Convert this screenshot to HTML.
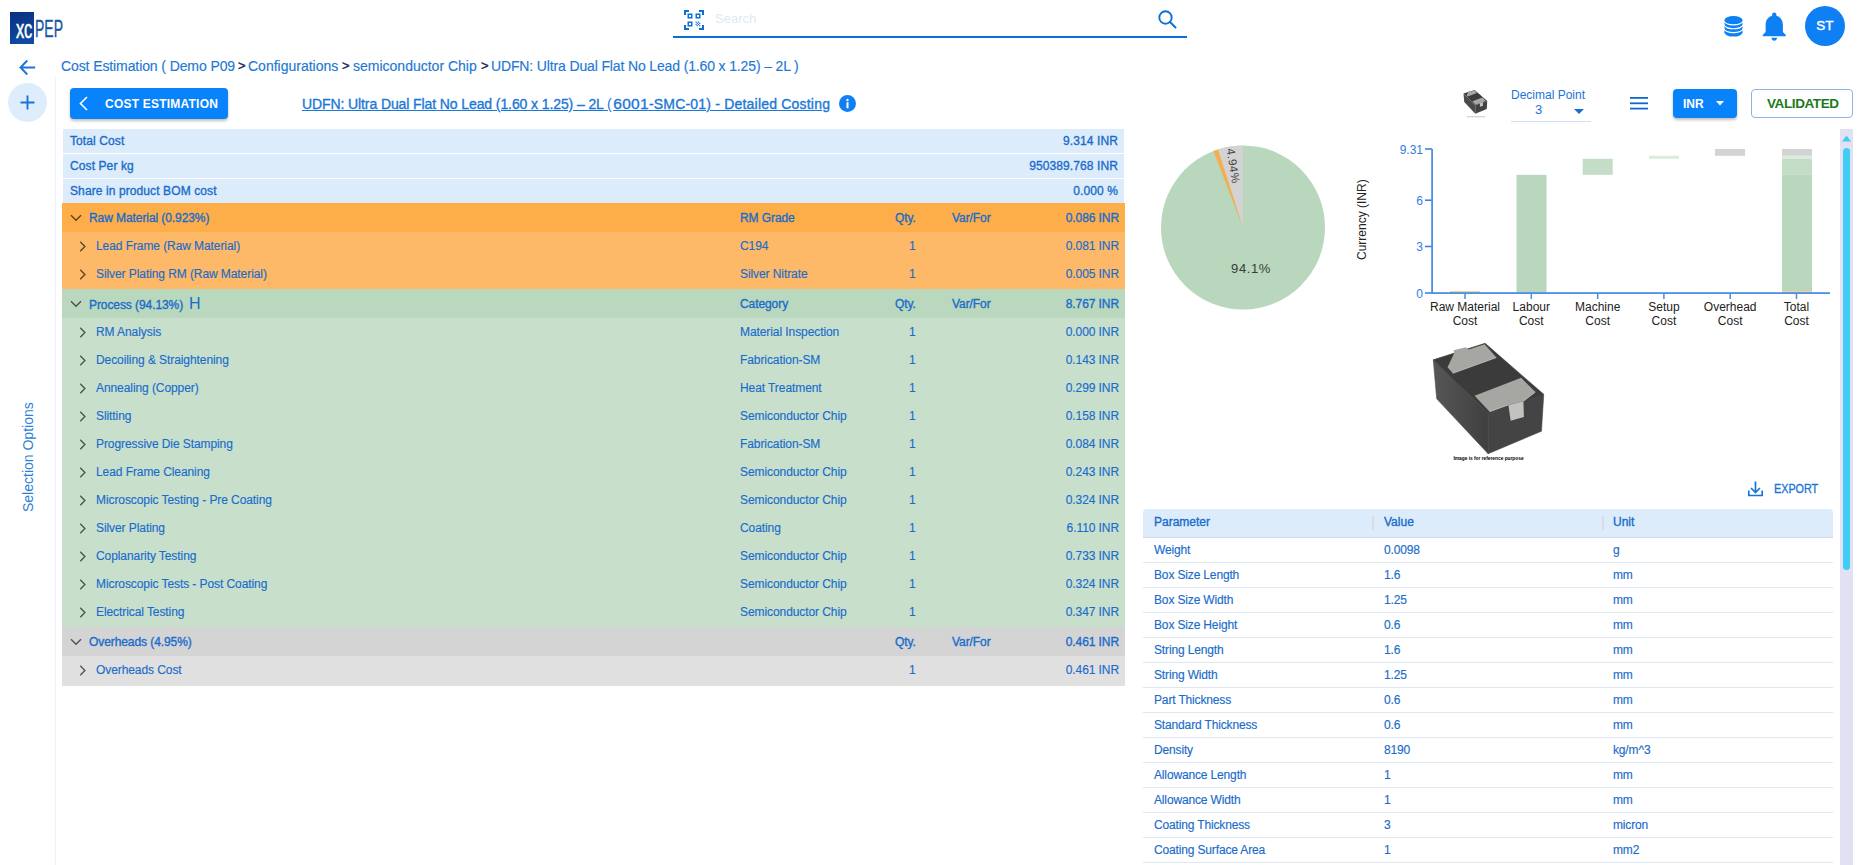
<!DOCTYPE html>
<html><head><meta charset="utf-8">
<style>
*{box-sizing:border-box;margin:0;padding:0}
html,body{width:1858px;height:865px;overflow:hidden;background:#fff;font-family:"Liberation Sans",sans-serif;color:#1a6ccb}
.r,.pr,.bc{-webkit-text-stroke:0.15px currentColor}
.a{position:absolute}
svg{display:block}
/* header */
#logo{left:10px;top:12px;width:24px;height:32px;background:linear-gradient(160deg,#0a2f80,#0f4fa6)}
#logo span{position:absolute;white-space:nowrap;font-weight:400;transform-origin:0 0}
#srchline{left:673px;top:36px;width:514px;height:2px;background:#0b6fd8}
#srchph{left:715px;top:11px;font-size:13px;color:#dfe8f6}
#avatar{left:1805px;top:6px;width:40px;height:40px;border-radius:50%;background:#0f80f4;color:#fff;font-size:13.5px;font-weight:400;-webkit-text-stroke:0.45px #fff;text-align:center;line-height:40px}
/* sidebar */
#sideline{left:55px;top:77px;width:1px;height:788px;background:#eef1f6}
#plus{left:8px;top:83px;width:39px;height:39px;border-radius:50%;background:#ddedfc}
#selopt{left:20px;top:512px;font-size:14px;color:#2b7fd8;transform:rotate(-90deg);transform-origin:0 0;white-space:nowrap}
/* breadcrumb */
.bc{top:58px;font-size:14px;white-space:nowrap;color:#1e78d4}
.bg{top:58px;font-size:13px;color:#1a1f5a;-webkit-text-stroke:0.4px #1a1f5a}
.md{font-weight:400!important;-webkit-text-stroke:0.35px currentColor}
/* toolbar */
#btnce{left:70px;top:88px;width:158px;height:31px;border-radius:4px;background:#0883fc;box-shadow:0 2px 3px rgba(0,0,0,.25);color:#fff;font-size:12px;font-weight:700}
#title{left:302px;top:95px;font-size:14px;font-weight:400;-webkit-text-stroke:0.35px currentColor;white-space:nowrap;text-decoration:underline;color:#1a78d8}
#info{left:839px;top:95px;width:17px;height:17px;border-radius:50%;background:#0f80f4}

/* table */
.r{position:absolute;left:62px;width:1063px;font-size:12px;white-space:nowrap;letter-spacing:-0.08px}
.r span{position:absolute}
.sm{left:63px;width:1061px;height:24px;line-height:24px;background:#ddecfb;font-weight:400;letter-spacing:0.1px;-webkit-text-stroke:0.35px currentColor;color:#1a6ccb}
.sl{left:7px}
.am{right:7px}
.rmh{background:#fdae48}.rmc{background:#fdb967}
.prh{background:#b9d8bd}.prc{background:#c8e0cb}
.ovh{background:#d4d4d4}.ovc{background:#e0e0e0}
.cv{position:absolute;left:8px;top:11px}
.cr{position:absolute;left:17px;top:9px}
.hl{left:27px;-webkit-text-stroke:0.35px currentColor}
.cl{left:34px}
.c2{left:678px}
.hb{-webkit-text-stroke:0.35px currentColor}
.qh{left:833px;-webkit-text-stroke:0.35px currentColor}
.qv{left:847px}
.vf{left:890px;-webkit-text-stroke:0.35px currentColor}
.r .am{right:6px}
.H{position:static!important;font-size:16px;font-weight:400;margin-left:6px;-webkit-text-stroke:0}

.ph{font-size:12px;-webkit-text-stroke:0.35px currentColor;color:#1a6ccb;white-space:nowrap}
.pr{left:1143px;width:690px;height:25px;border-bottom:1px solid #dfe8f2;font-size:12px;color:#1a6ccb;white-space:nowrap;letter-spacing:-0.15px}
.pr span{position:absolute;top:4.5px}
</style></head>
<body>
<!-- HEADER -->
<div id="logo" class="a"></div>
<div class="a" style="left:16px;top:14.9px;font-size:25px;line-height:normal;color:#fff;transform:scaleX(.66);transform-origin:0 0;letter-spacing:-0.5px;-webkit-text-stroke:0.5px #fff">xc</div>
<div class="a" style="left:34.5px;top:15.7px;font-size:23.3px;line-height:normal;color:#1a56a6;transform:scaleX(.6);transform-origin:0 0;-webkit-text-stroke:0.4px #1a56a6">PEP</div>

<svg class="a" style="left:684px;top:10px" width="20" height="20" viewBox="0 0 20 20" fill="#0e6fd6">
<path d="M0 0h5v2H2v3H0zM15 0h5v5h-2V2h-3zM0 15h2v3h3v2H0zM18 15h2v5h-5v-2h3z"/>
<path d="M3.5 3.5h5v5h-5zM5 5v2h2V5zM11.5 3.5h5v5h-5zM13 5v2h2V5zM3.5 11.5h5v5h-5zM5 13v2h2v-2z" fill-rule="evenodd"/>
<path d="M11.5 11.5h1.2v1.2h-1.2zM13.9 11.5h1.2v1.2h-1.2zM12.7 12.7h1.2v1.2h-1.2zM15.1 12.7h1.2v1.2h-1.2zM11.5 13.9h1.2v1.2h-1.2zM13.9 13.9h1.2v1.2h-1.2zM12.7 15.1h1.2v1.2h-1.2zM15.1 15.1h1.2v1.2h-1.2z"/>
</svg>
<div id="srchph" class="a">Search</div>
<svg class="a" style="left:1157px;top:9px" width="22" height="22" viewBox="0 0 22 22"><circle cx="8.5" cy="8.5" r="6.2" fill="none" stroke="#0e6fd6" stroke-width="1.9"/><path d="M13 13l5.5 5.5" stroke="#0e6fd6" stroke-width="2" stroke-linecap="round"/></svg>
<div id="srchline" class="a"></div>

<svg class="a" style="left:1720px;top:12px" width="28" height="28" viewBox="0 0 28 28"><g fill="#0f80f4"><rect x="4.5" y="8" width="18" height="12.6"/><ellipse cx="13.5" cy="20.6" rx="9" ry="4"/><ellipse cx="13.5" cy="8" rx="9" ry="4"/></g><g fill="none" stroke="#fff" stroke-width="1.15"><path d="M4.2 8.9A9.3 4 0 0 0 22.8 8.9"/><path d="M4.2 12.8A9.3 4 0 0 0 22.8 12.8"/><path d="M4.2 16.7A9.3 4 0 0 0 22.8 16.7"/></g></svg>
<svg class="a" style="left:1757.2px;top:9.1px" width="34.56" height="34.56" viewBox="0 0 24 24" fill="#0f80f4"><path d="M12 22c1.1 0 2-.9 2-2h-4c0 1.1.89 2 2 2zm6-6v-5c0-3.07-1.64-5.640-4.5-6.32V4c0-.83-.67-1.5-1.5-1.5s-1.5.67-1.5 1.5v.68C7.630 5.36 6 7.92 6 11v5l-2 2v1h16v-1l-2-2z"/></svg>
<div id="avatar" class="a">ST</div>

<!-- SIDEBAR -->
<svg class="a" style="left:19px;top:59px" width="17" height="17" viewBox="0 0 17 17"><path d="M16.2 8.5H1.8M8.3 1.5L1.5 8.5l6.8 7" fill="none" stroke="#1a73d8" stroke-width="1.9"/></svg>
<div id="plus" class="a"></div>
<svg class="a" style="left:20px;top:95px" width="15" height="15" viewBox="0 0 15 15"><path d="M7.5 0.5v14M0.5 7.5h14" stroke="#1a73d8" stroke-width="1.9"/></svg>
<div id="sideline" class="a"></div>
<div id="selopt" class="a">Selection Options</div>

<!-- BREADCRUMB -->
<div class="a bc" style="left:61px;letter-spacing:-0.1px">Cost Estimation ( Demo P09</div><div class="a bg" style="left:238px">&gt;</div><div class="a bc" style="left:248px">Configurations</div><div class="a bg" style="left:342px">&gt;</div><div class="a bc" style="left:353px">semiconductor Chip</div><div class="a bg" style="left:481px">&gt;</div><div class="a bc" style="left:491px;letter-spacing:-0.14px">UDFN: Ultra Dual Flat No Lead (1.60 x 1.25) – 2L )</div>

<!-- TOOLBAR -->
<div id="btnce" class="a">
<svg class="a" style="left:8px;top:8px" width="11" height="15" viewBox="0 0 11 15"><path d="M9 1L2.5 7.5 9 14" fill="none" stroke="#fff" stroke-width="1.6"/></svg>
<span class="a" style="left:35px;top:8.5px;white-space:nowrap;letter-spacing:0.22px">COST ESTIMATION</span>
</div>
<div id="title" class="a"><span style="letter-spacing:-0.1px">UDFN: Ultra Dual Flat No Lead (1.60 x 1.25) – 2L </span><span style="-webkit-text-stroke:0">(</span><span style="font-size:15.5px;letter-spacing:0.3px;margin-left:1.5px">6001</span><span style="letter-spacing:0.2px">-SMC-01) - Detailed Costing</span></div>
<div id="info" class="a"><svg width="17" height="17" viewBox="0 0 17 17"><circle cx="8.5" cy="5" r="1.2" fill="#fff"/><rect x="7.5" y="7.2" width="2" height="6" fill="#fff"/></svg></div>

<!-- TABLE -->
<div class="r sm" style="top:129px"><span class="sl">Total Cost</span><span class="am">9.314 INR</span></div>
<div class="r sm" style="top:154px"><span class="sl">Cost Per kg</span><span class="am">950389.768 INR</span></div>
<div class="r sm" style="top:179px"><span class="sl">Share in product BOM cost</span><span class="am">0.000 %</span></div>
<div class="r rmh" style="top:203px;height:29px;line-height:30.5px"><svg class="cv" width="12" height="8" viewBox="0 0 12 8"><path d="M1 1.2l5 5 5-5" fill="none" stroke="rgba(0,0,0,.62)" stroke-width="1.4"/></svg><span class="hl">Raw Material (0.923%)</span><span class="c2 hb">RM Grade</span><span class="qh">Qty.</span><span class="vf">Var/For</span><span class="am hb">0.086 INR</span></div>
<div class="r rmc" style="top:232px;height:28px;line-height:28px"><svg class="cr" width="8" height="11" viewBox="0 0 8 11"><path d="M1.2 0.8l4.7 4.7-4.7 4.7" fill="none" stroke="rgba(0,0,0,.62)" stroke-width="1.4"/></svg><span class="cl">Lead Frame (Raw Material)</span><span class="c2">C194</span><span class="qv">1</span><span class="am">0.081 INR</span></div>
<div class="r rmc" style="top:260px;height:29px;line-height:29px"><svg class="cr" width="8" height="11" viewBox="0 0 8 11"><path d="M1.2 0.8l4.7 4.7-4.7 4.7" fill="none" stroke="rgba(0,0,0,.62)" stroke-width="1.4"/></svg><span class="cl">Silver Plating RM (Raw Material)</span><span class="c2">Silver Nitrate</span><span class="qv">1</span><span class="am">0.005 INR</span></div>
<div class="r prh" style="top:289px;height:29px;line-height:30.5px"><svg class="cv" width="12" height="8" viewBox="0 0 12 8"><path d="M1 1.2l5 5 5-5" fill="none" stroke="rgba(0,0,0,.62)" stroke-width="1.4"/></svg><span class="hl">Process (94.13%)<span class="H">H</span></span><span class="c2 hb">Category</span><span class="qh">Qty.</span><span class="vf">Var/For</span><span class="am hb">8.767 INR</span></div>
<div class="r prc" style="top:318px;height:28px;line-height:28px"><svg class="cr" width="8" height="11" viewBox="0 0 8 11"><path d="M1.2 0.8l4.7 4.7-4.7 4.7" fill="none" stroke="rgba(0,0,0,.62)" stroke-width="1.4"/></svg><span class="cl">RM Analysis</span><span class="c2">Material Inspection</span><span class="qv">1</span><span class="am">0.000 INR</span></div>
<div class="r prc" style="top:346px;height:28px;line-height:28px"><svg class="cr" width="8" height="11" viewBox="0 0 8 11"><path d="M1.2 0.8l4.7 4.7-4.7 4.7" fill="none" stroke="rgba(0,0,0,.62)" stroke-width="1.4"/></svg><span class="cl">Decoiling &amp; Straightening</span><span class="c2">Fabrication-SM</span><span class="qv">1</span><span class="am">0.143 INR</span></div>
<div class="r prc" style="top:374px;height:28px;line-height:28px"><svg class="cr" width="8" height="11" viewBox="0 0 8 11"><path d="M1.2 0.8l4.7 4.7-4.7 4.7" fill="none" stroke="rgba(0,0,0,.62)" stroke-width="1.4"/></svg><span class="cl">Annealing (Copper)</span><span class="c2">Heat Treatment</span><span class="qv">1</span><span class="am">0.299 INR</span></div>
<div class="r prc" style="top:402px;height:28px;line-height:28px"><svg class="cr" width="8" height="11" viewBox="0 0 8 11"><path d="M1.2 0.8l4.7 4.7-4.7 4.7" fill="none" stroke="rgba(0,0,0,.62)" stroke-width="1.4"/></svg><span class="cl">Slitting</span><span class="c2">Semiconductor Chip</span><span class="qv">1</span><span class="am">0.158 INR</span></div>
<div class="r prc" style="top:430px;height:28px;line-height:28px"><svg class="cr" width="8" height="11" viewBox="0 0 8 11"><path d="M1.2 0.8l4.7 4.7-4.7 4.7" fill="none" stroke="rgba(0,0,0,.62)" stroke-width="1.4"/></svg><span class="cl">Progressive Die Stamping</span><span class="c2">Fabrication-SM</span><span class="qv">1</span><span class="am">0.084 INR</span></div>
<div class="r prc" style="top:458px;height:28px;line-height:28px"><svg class="cr" width="8" height="11" viewBox="0 0 8 11"><path d="M1.2 0.8l4.7 4.7-4.7 4.7" fill="none" stroke="rgba(0,0,0,.62)" stroke-width="1.4"/></svg><span class="cl">Lead Frame Cleaning</span><span class="c2">Semiconductor Chip</span><span class="qv">1</span><span class="am">0.243 INR</span></div>
<div class="r prc" style="top:486px;height:28px;line-height:28px"><svg class="cr" width="8" height="11" viewBox="0 0 8 11"><path d="M1.2 0.8l4.7 4.7-4.7 4.7" fill="none" stroke="rgba(0,0,0,.62)" stroke-width="1.4"/></svg><span class="cl">Microscopic Testing - Pre Coating</span><span class="c2">Semiconductor Chip</span><span class="qv">1</span><span class="am">0.324 INR</span></div>
<div class="r prc" style="top:514px;height:28px;line-height:28px"><svg class="cr" width="8" height="11" viewBox="0 0 8 11"><path d="M1.2 0.8l4.7 4.7-4.7 4.7" fill="none" stroke="rgba(0,0,0,.62)" stroke-width="1.4"/></svg><span class="cl">Silver Plating</span><span class="c2">Coating</span><span class="qv">1</span><span class="am">6.110 INR</span></div>
<div class="r prc" style="top:542px;height:28px;line-height:28px"><svg class="cr" width="8" height="11" viewBox="0 0 8 11"><path d="M1.2 0.8l4.7 4.7-4.7 4.7" fill="none" stroke="rgba(0,0,0,.62)" stroke-width="1.4"/></svg><span class="cl">Coplanarity Testing</span><span class="c2">Semiconductor Chip</span><span class="qv">1</span><span class="am">0.733 INR</span></div>
<div class="r prc" style="top:570px;height:28px;line-height:28px"><svg class="cr" width="8" height="11" viewBox="0 0 8 11"><path d="M1.2 0.8l4.7 4.7-4.7 4.7" fill="none" stroke="rgba(0,0,0,.62)" stroke-width="1.4"/></svg><span class="cl">Microscopic Tests - Post Coating</span><span class="c2">Semiconductor Chip</span><span class="qv">1</span><span class="am">0.324 INR</span></div>
<div class="r prc" style="top:598px;height:29px;line-height:29px"><svg class="cr" width="8" height="11" viewBox="0 0 8 11"><path d="M1.2 0.8l4.7 4.7-4.7 4.7" fill="none" stroke="rgba(0,0,0,.62)" stroke-width="1.4"/></svg><span class="cl">Electrical Testing</span><span class="c2">Semiconductor Chip</span><span class="qv">1</span><span class="am">0.347 INR</span></div>
<div class="r ovh" style="top:627px;height:29px;line-height:30.5px"><svg class="cv" width="12" height="8" viewBox="0 0 12 8"><path d="M1 1.2l5 5 5-5" fill="none" stroke="rgba(0,0,0,.62)" stroke-width="1.4"/></svg><span class="hl">Overheads (4.95%)</span><span class="qh">Qty.</span><span class="vf">Var/For</span><span class="am hb">0.461 INR</span></div>
<div class="r ovc" style="top:656px;height:29.5px;line-height:29px"><svg class="cr" width="8" height="11" viewBox="0 0 8 11"><path d="M1.2 0.8l4.7 4.7-4.7 4.7" fill="none" stroke="rgba(0,0,0,.62)" stroke-width="1.4"/></svg><span class="cl">Overheads Cost</span><span class="qv">1</span><span class="am">0.461 INR</span></div>
<!-- RIGHT -->
<svg class="a" style="left:0;top:0" width="1500" height="125" viewBox="0 0 1500 125"><polygon points="1463.50,93.55 1474.65,90.00 1487.25,100.99 1475.29,105.02" fill="#3b3b3b"/><polygon points="1463.50,93.55 1475.29,105.02 1475.29,113.75 1464.24,101.96" fill="#4a4a4a"/><polygon points="1475.29,105.02 1487.25,100.99 1486.76,108.90 1475.29,113.75" fill="#424242"/><polygon points="1466.57,95.17 1468.19,92.26 1468.02,91.62 1470.61,90.97 1471.09,91.39 1474.49,90.32 1477.07,93.07 1467.70,96.46" fill="#a6a7a2"/><polygon points="1472.39,101.31 1482.40,97.43 1485.47,100.50 1482.89,102.44 1479.66,103.25 1475.62,104.70" fill="#a6a7a2"/><polygon points="1479.66,103.25 1482.89,102.44 1482.98,105.83 1480.14,106.64" fill="#c4c4c0"/><rect x="1467" y="116.5" width="18" height="0.7" fill="#aaa"/></svg>
<div class="a" style="left:1511px;top:88px;font-size:12px;color:#1b74d8;white-space:nowrap">Decimal Point</div>
<div class="a" style="left:1535px;top:102px;font-size:13px;color:#1b74d8">3</div>
<svg class="a" style="left:1574px;top:109px" width="10" height="5" viewBox="0 0 10 5"><path d="M0 0h10L5 5z" fill="#1470d6"/></svg>
<div class="a" style="left:1511px;top:121px;width:80px;height:1px;background:#cfe0f3"></div>
<svg class="a" style="left:1630px;top:96px" width="18" height="14" viewBox="0 0 18 14" fill="#1267cf"><rect y="1" width="18" height="1.8"/><rect y="6.4" width="18" height="1.8"/><rect y="11.7" width="18" height="1.8"/></svg>
<div class="a" style="left:1673px;top:89px;width:64px;height:29px;border-radius:4px;background:#0883fc;box-shadow:0 2px 3px rgba(0,0,0,.25)">
<span class="a" style="left:10px;top:8px;color:#fff;font-size:12px;font-weight:700">INR</span>
<svg class="a" style="left:43px;top:12px" width="8" height="5" viewBox="0 0 8 5"><path d="M0 0h8L4 4.5z" fill="#fff"/></svg></div>
<div class="a" style="left:1751px;top:89px;width:102px;height:29px;border-radius:4px;border:1px solid #8fb3e3;">
<span class="a" style="left:15px;top:5.5px;color:#1b7a1b;font-size:13.5px;font-weight:700;letter-spacing:-0.4px;white-space:nowrap">VALIDATED</span></div>

<svg class="a" style="left:0;top:0" width="1340" height="330" viewBox="0 0 1340 330"><circle cx="1243" cy="227.5" r="82" fill="#b8d7bc"/><path d="M1243 227.5L1243 145.5A82 82 0 0 0 1217.95 149.42Z" fill="#d3d3d3"/><path d="M1243 227.5L1217.95 149.42A82 82 0 0 0 1213.47 151.00Z" fill="#f5ad4e"/><text x="1251" y="273" font-size="13" letter-spacing="0.6" fill="#3a3a3a" text-anchor="middle" font-family="Liberation Sans">94.1%</text><text transform="translate(1226.5,149) rotate(81)" font-size="11.5" letter-spacing="0.6" fill="#444" font-family="Liberation Sans">4.94%</text></svg>
<svg class="a" style="left:1340px;top:130px" width="500" height="210" viewBox="1340 130 500 210"><g fill="#2f7de1" font-size="12" font-family="Liberation Sans" text-anchor="end"><text x="1423" y="153.5">9.31</text><rect x="1425" y="148.25" width="7" height="1.5"/><text x="1423" y="204.7">6</text><rect x="1425" y="199.45" width="7" height="1.5"/><text x="1423" y="251.0">3</text><rect x="1425" y="245.75" width="7" height="1.5"/><text x="1423" y="297.5">0</text><rect x="1425" y="292.25" width="7" height="1.5"/></g><rect x="1431.2" y="149" width="1.8" height="145" fill="#4b8fe6"/><rect x="1516.5" y="174.8" width="30" height="118.19999999999999" fill="#b8d7bc"/><rect x="1582.7" y="158.8" width="30" height="16" fill="#c3ddc6"/><rect x="1649" y="155.8" width="30" height="3" fill="#daecdb"/><rect x="1715" y="149" width="30" height="6.8" fill="#d3d3d3"/><rect x="1782" y="149" width="30" height="6.8" fill="#d3d3d3"/><rect x="1782" y="155.8" width="30" height="3" fill="#daecdb"/><rect x="1782" y="158.8" width="30" height="16" fill="#c3ddc6"/><rect x="1782" y="174.8" width="30" height="118.19999999999999" fill="#b8d7bc"/><rect x="1450" y="291" width="30" height="2" fill="#efcfa8"/><rect x="1782" y="291" width="30" height="2" fill="#efcfa8"/><rect x="1432" y="292.2" width="398" height="1.8" fill="#4b8fe6"/><g font-size="12" fill="#222" font-family="Liberation Sans" text-anchor="middle"><rect x="1464.25" y="293" width="1.5" height="6" fill="#4b8fe6"/><text x="1465" y="311">Raw Material</text><text x="1465" y="325">Cost</text><rect x="1530.55" y="293" width="1.5" height="6" fill="#4b8fe6"/><text x="1531.3" y="311">Labour</text><text x="1531.3" y="325">Cost</text><rect x="1596.95" y="293" width="1.5" height="6" fill="#4b8fe6"/><text x="1597.7" y="311">Machine</text><text x="1597.7" y="325">Cost</text><rect x="1663.15" y="293" width="1.5" height="6" fill="#4b8fe6"/><text x="1663.9" y="311">Setup</text><text x="1663.9" y="325">Cost</text><rect x="1729.45" y="293" width="1.5" height="6" fill="#4b8fe6"/><text x="1730.2" y="311">Overhead</text><text x="1730.2" y="325">Cost</text><rect x="1795.75" y="293" width="1.5" height="6" fill="#4b8fe6"/><text x="1796.5" y="311">Total</text><text x="1796.5" y="325">Cost</text></g><text transform="translate(1366,260) rotate(-90)" font-size="12" fill="#222" font-family="Liberation Sans">Currency (INR)</text></svg>
<svg class="a" style="left:0;top:0" width="1560" height="470" viewBox="0 0 1560 470"><defs><linearGradient id="lf" x1="0" y1="0" x2="1" y2="0"><stop offset="0" stop-color="#575757"/><stop offset="1" stop-color="#3f3f3f"/></linearGradient></defs><polygon points="1433.27,359.80 1488.12,413.15 1488.12,453.73 1436.72,398.87" fill="url(#lf)" stroke="#4a4a4a" stroke-width="0.6"/><polygon points="1488.12,413.15 1543.73,394.36 1541.47,431.18 1488.12,453.73" fill="#444" stroke="#444" stroke-width="0.6"/><polygon points="1433.27,359.80 1485.11,343.27 1543.73,394.36 1488.12,413.15" fill="#3b3b3b" stroke="#3b3b3b" stroke-width="0.6"/><polygon points="1447.54,367.31 1454.31,353.03 1453.55,350.33 1465.88,347.32 1468.58,349.58 1484.66,344.32 1496.39,357.54 1452.80,373.32" fill="#a6a7a2"/><polyline points="1452.80,373.32 1496.39,357.54" stroke="#d0d0cc" stroke-width="0.7" fill="none"/><polygon points="1474.59,395.87 1521.18,377.83 1535.46,392.11 1523.44,401.13 1508.41,404.88 1489.62,411.65" fill="#a6a7a2"/><polyline points="1489.62,411.65 1508.41,404.88" stroke="#d0d0cc" stroke-width="0.7" fill="none"/><polyline points="1523.44,401.13 1535.46,392.11" stroke="#d0d0cc" stroke-width="0.7" fill="none"/><polygon points="1508.41,404.88 1523.44,401.13 1523.89,416.91 1510.66,420.66" fill="#c2c2be"/><text x="1488.5" y="460" font-size="4.8" font-weight="700" fill="#000" text-anchor="middle" font-family="Liberation Sans">Image is for reference purpose</text></svg>
<svg class="a" style="left:1747px;top:480px" width="17" height="17" viewBox="0 0 17 17"><path d="M8.5 1.5v11M4 8l4.5 4.5L13 8M1.8 10.5v5h13.4v-5" fill="none" stroke="#1a73d8" stroke-width="1.7"/></svg>
<div class="a" style="left:1774px;top:482px;font-size:12px;-webkit-text-stroke:0.3px currentColor;transform:scaleX(.9);transform-origin:0 0;color:#1a73d8">EXPORT</div>
<div class="a" style="left:1143px;top:509px;width:690px;height:29px;background:#ddecfb;border-radius:4px 4px 0 0;border-bottom:1px solid #d3dbe6"></div>
<div class="a" style="left:1372px;top:516px;width:2px;height:14px;background:#d8dde3"></div>
<div class="a" style="left:1602px;top:516px;width:2px;height:14px;background:#d8dde3"></div>
<div class="a ph" style="left:1154px;top:515px">Parameter</div><div class="a ph" style="left:1384px;top:515px">Value</div><div class="a ph" style="left:1613px;top:515px">Unit</div>
<div class="a pr" style="top:538px"><span style="left:11px">Weight</span><span style="left:241px">0.0098</span><span style="left:470px">g</span></div>
<div class="a pr" style="top:563px"><span style="left:11px">Box Size Length</span><span style="left:241px">1.6</span><span style="left:470px">mm</span></div>
<div class="a pr" style="top:588px"><span style="left:11px">Box Size Width</span><span style="left:241px">1.25</span><span style="left:470px">mm</span></div>
<div class="a pr" style="top:613px"><span style="left:11px">Box Size Height</span><span style="left:241px">0.6</span><span style="left:470px">mm</span></div>
<div class="a pr" style="top:638px"><span style="left:11px">String Length</span><span style="left:241px">1.6</span><span style="left:470px">mm</span></div>
<div class="a pr" style="top:663px"><span style="left:11px">String Width</span><span style="left:241px">1.25</span><span style="left:470px">mm</span></div>
<div class="a pr" style="top:688px"><span style="left:11px">Part Thickness</span><span style="left:241px">0.6</span><span style="left:470px">mm</span></div>
<div class="a pr" style="top:713px"><span style="left:11px">Standard Thickness</span><span style="left:241px">0.6</span><span style="left:470px">mm</span></div>
<div class="a pr" style="top:738px"><span style="left:11px">Density</span><span style="left:241px">8190</span><span style="left:470px">kg/m^3</span></div>
<div class="a pr" style="top:763px"><span style="left:11px">Allowance Length</span><span style="left:241px">1</span><span style="left:470px">mm</span></div>
<div class="a pr" style="top:788px"><span style="left:11px">Allowance Width</span><span style="left:241px">1</span><span style="left:470px">mm</span></div>
<div class="a pr" style="top:813px"><span style="left:11px">Coating Thickness</span><span style="left:241px">3</span><span style="left:470px">micron</span></div>
<div class="a pr" style="top:838px"><span style="left:11px">Coating Surface Area</span><span style="left:241px">1</span><span style="left:470px">mm2</span></div>
<div class="a" style="left:1840px;top:129px;width:13px;height:736px;background:#e2e0f3"></div>
<svg class="a" style="left:1842px;top:135px" width="9" height="7" viewBox="0 0 9 7"><path d="M4.5 0.5L9 6.5H0z" fill="#3fcdf4"/></svg>
<div class="a" style="left:1843px;top:148px;width:7px;height:422px;border-radius:3.5px;background:#3fcdf4"></div>
</body></html>
